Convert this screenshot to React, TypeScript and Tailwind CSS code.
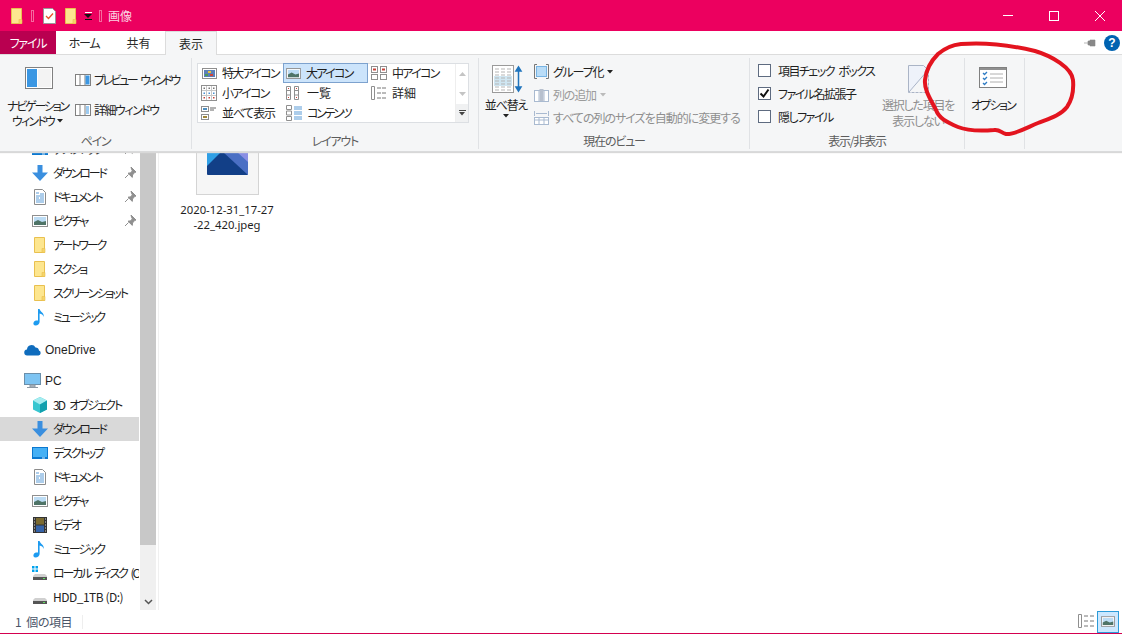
import { ReactNode } from "react";

const Folder = ({ size = 16 }: { size?: number }) => (
  <svg width={size} height={size} viewBox="0 0 16 16">
    <path d="M2.5 .5h10v15h-10z" fill="#fde68f" stroke="#e9c04f" />
    <path d="M10 15.5v-4h3v4z" fill="#f6d469" stroke="#e9c04f" strokeWidth=".6" />
  </svg>
);

const Down = () => (
  <svg width="16" height="16" viewBox="0 0 16 16">
    <path d="M5.5 0h5v7.5H16L8 16 0 7.5h5.5z" fill="#3a8fdf" />
  </svg>
);

const Doc = () => (
  <svg width="16" height="16" viewBox="0 0 16 16">
    <path d="M2.5 .5h8l3 3v12h-11z" fill="#fff" stroke="#8b8b8b" />
    <path d="M4 4h3M8 5h4M4 7h8M4 9h3M8 9h4M4 11h8M4 13h8" stroke="#5a9bd6" />
  </svg>
);

const Pic = ({ w = 16, h = 12 }: { w?: number; h?: number }) => (
  <svg width={w} height={h} viewBox="0 0 16 12">
    <rect x=".5" y=".5" width="15" height="11" fill="#fff" stroke="#8f8f8f" />
    <rect x="2" y="2" width="12" height="8" fill="#bcdcf4" />
    <path d="M2 7l4-2 4 2 4-1v4H2z" fill="#4f7467" />
  </svg>
);

const Note = () => (
  <svg width="16" height="18" viewBox="0 0 16 18">
    <path d="M6 1h1.600c.4 3 5 3.400 4 8-.6-2-2-3-4-3.400V14c0 2-2 3.400-4 3.400S1 16 1.600 14.400 4.200 12.200 6 12.600z" fill="#1d9bf0" />
  </svg>
);

const Cloud = () => (
  <svg width="17" height="12" viewBox="0 0 17 12">
    <path d="M3.500 11.500a3 3 0 0 1-.5-6 4.500 4.500 0 0 1 8.500-2 3.500 3.500 0 0 1 3.500 3 2.600 2.600 0 0 1 -.5 5z" fill="#0f6cbd" />
  </svg>
);

const Monitor = () => (
  <svg width="17" height="16" viewBox="0 0 17 16">
    <rect x=".5" y=".5" width="16" height="11" fill="#7ec4f2" stroke="#6b8faa" />
    <path d="M6 12h5v2H6zM3 14.500h11" stroke="#8c98a3" fill="#b9c3cc" />
  </svg>
);

const Cube = () => (
  <svg width="16" height="16" viewBox="0 0 16 16">
    <path d="M8 0l7 3.500v9L8 16l-7-3.500v-9z" fill="#37c6d0" />
    <path d="M8 7.500L1 3.500 8 0l7 3.500z" fill="#a5ecf0" />
    <path d="M8 7.500V16l7-3.500v-9z" fill="#12a0ae" />
  </svg>
);

const Desktop = () => (
  <svg width="16" height="12" viewBox="0 0 16 12">
    <rect width="16" height="12" fill="#0b78d0" />
    <rect x="1" y="1" width="14" height="9" fill="#45b0f5" />
    <rect x="10" y="10.500" width="3" height="1" fill="#d6ecfb" />
  </svg>
);

const Film = () => (
  <svg width="14" height="16" viewBox="0 0 14 16">
    <rect width="14" height="16" fill="#333" />
    <rect x="3" y="1" width="8" height="6.500" fill="#7a6a30" />
    <rect x="3" y="8.500" width="8" height="6.500" fill="#3563a8" />
    <path d="M1 2h1M1 5h1M1 8h1M1 11h1M1 14h1M12 2h1M12 5h1M12 8h1M12 11h1M12 14h1" stroke="#ddd" />
  </svg>
);

const Drive = ({ win = false }: { win?: boolean }) => (
  <svg width="16" height="14" viewBox="0 0 16 14">
    {win && <path d="M0 0h2.500v2.500H0zM3.500 0H6v2.500H3.500zM0 3.500h2.500V6H0zM3.500 3.500H6V6H3.500z" fill="#00a2ed" />}
    <path d="M3 8h10l2 2v3H1v-3z" fill="#d0d0d0" />
    <rect x="1" y="11" width="14" height="3" fill="#555" />
    <rect x="11" y="12" width="2" height="1" fill="#5fe05f" />
  </svg>
);

const Pin = ({ color = "#8f8f8f" }: { color?: string }) => (
  <svg width="12" height="12" viewBox="0 0 12 12">
    <path d="M7 0l5 5-1.500.6-2 2.400-.2 2.400L4 6.200l2.400-.3 2-2-.8-1.500zM4.500 7.500L1 11" fill={color} stroke={color} />
  </svg>
);

const Caret = ({ color = "#222" }: { color?: string }) => (
  <svg width="6" height="4" viewBox="0 0 6 4" className="inline-block">
    <path d="M0 0h6L3 3.500z" fill={color} />
  </svg>
);

function TreeRow({ icon, label, pin, active, track = "tracking-[-2.100px] [word-spacing:4px]" }: { icon: ReactNode; label: string; pin?: boolean; active?: boolean; track?: string }) {
  return (
    <div className={`flex h-[24px] w-[139px] items-center whitespace-nowrap overflow-hidden ${active ? "bg-[#d9d9d9]" : ""}`}>
      <span className="ml-[32px] flex w-[16px] shrink-0 justify-center">{icon}</span>
      <span className={`ml-[5px] flex-1 overflow-hidden leading-[18px] ${track}`}>{label}</span>
      {pin && (
        <span className="mr-[3px] shrink-0">
          <Pin />
        </span>
      )}
    </div>
  );
}

const GalleryIcon = ({ kind }: { kind: string }) => {
  if (kind === "pic") return <Pic w={15} h={11} />;
  if (kind === "xl")
    return (
      <svg width="15" height="11" viewBox="0 0 15 11">
        <rect x=".5" y=".5" width="14" height="10" fill="#fff" stroke="#8f8f8f" />
        <rect x="2" y="2" width="11" height="7" fill="#5c7fb8" />
        <path d="M6 3h3v2H6z" fill="#e8c43a" />
        <path d="M8 6h3v2H8z" fill="#d0433a" />
        <path d="M3 6h3v2H3z" fill="#4f9a55" />
      </svg>
    );
  if (kind === "grid")
    return (
      <svg width="16" height="16" viewBox="0 0 16 16">
        <rect x=".5" y=".5" width="15" height="15" fill="#fff" stroke="#8f8f8f" />
        <path d="M5.500 1v14M10.500 1v14M1 5.500h14M1 10.500h14" stroke="#c8c8c8" />
        <path d="M2.500 2.500h1.500v1.500h-1.500zM7.500 2.500h1.500v1.500h-1.500zM12 2.500h1.500v1.500h-1.500z" fill="#777" />
        <path d="M2.500 7.500h1.500v1.500h-1.500zM7.500 7.500h1.500v1.500h-1.500zM12 7.500h1.500v1.500h-1.500z" fill="#4a90d0" />
        <path d="M2.500 12h1.500v1.500h-1.500zM7.500 12h1.500v1.500h-1.500zM12 12h1.500v1.500h-1.500z" fill="#c8433a" />
      </svg>
    );
  if (kind === "list")
    return (
      <svg width="16" height="16" viewBox="0 0 16 16">
        <path d="M.5 1.500h4v13h-4zM8.500 1.500h4v13h-4z" fill="#fff" stroke="#8f8f8f" />
        <path d="M1 5.500h3M1 10h3M9 5.500h3M9 10h3" stroke="#8f8f8f" />
        <path d="M2 3h1v1H2zM10 3h1v1h-1zM2 12h1v1H2zM10 12h1v1h-1z" fill="#d0433a" />
      </svg>
    );
  if (kind === "detail")
    return (
      <svg width="16" height="16" viewBox="0 0 16 16">
        <path d="M.5 1.500h3v13h-3z" fill="#fff" stroke="#8f8f8f" />
        <path d="M6 3h4M11 3h4M6 8h4M11 8h4M6 13h4M11 13h4" stroke="#777" />
      </svg>
    );
  if (kind === "tile")
    return (
      <svg width="16" height="16" viewBox="0 0 16 16">
        <rect x=".5" y="1.500" width="7" height="5" fill="#fff" stroke="#8f8f8f" />
        <rect x=".5" y="9.500" width="7" height="5" fill="#fff" stroke="#8f8f8f" />
        <path d="M2 3h4v2H2z" fill="#4f8fc0" />
        <path d="M2 11h4v2H2z" fill="#a0873a" />
        <path d="M9 3h6M9 5h4" stroke="#666" />
      </svg>
    );
  if (kind === "content")
    return (
      <svg width="16" height="16" viewBox="0 0 16 16">
        <path d="M.5 .5h5v4h-5zM.5 6h5v4h-5zM.5 11.500h5v4h-5z" fill="#fff" stroke="#8f8f8f" />
        <path d="M8 2h8M8 4h8M8 7h8M8 9h8M8 12h8M8 14h8" stroke="#5a9bd6" />
      </svg>
    );
  return (
    <svg width="16" height="16" viewBox="0 0 16 16">
      <rect x=".5" y="1.500" width="6" height="6" fill="#fff" stroke="#8f8f8f" />
      <rect x="9.500" y="1.500" width="6" height="6" fill="#fff" stroke="#8f8f8f" />
      <rect x=".5" y="9.500" width="6" height="5" fill="#fff" stroke="#8f8f8f" />
      <rect x="9.500" y="9.500" width="6" height="5" fill="#fff" stroke="#8f8f8f" />
      <path d="M2 3.500h3v2H2zM11 3.500h3v2h-3z" fill="#c8433a" />
    </svg>
  );
};

function GalleryItem({ kind, label, on, track = "tracking-[-1.700px]" }: { kind: string; label: string; on?: boolean; track?: string }) {
  return (
    <div className={`flex h-[20px] items-center whitespace-nowrap ${on ? "border border-[#7da2ce] bg-[#cce4fb] pl-[1px]" : "pl-[3px]"}`}>
      <span className="flex w-[16px] justify-center">
        <GalleryIcon kind={kind} />
      </span>
      <span className={`ml-[5px] ${track}`}>{label}</span>
    </div>
  );
}

function Check({ label, on }: { label: string; on?: boolean }) {
  return (
    <div className="flex h-[23px] items-center whitespace-nowrap">
      <span className="flex h-[13px] w-[13px] items-center justify-center border border-[#5e6b80] bg-white">
        {on && (
          <svg width="11" height="11" viewBox="0 0 11 11">
            <path d="M1.500 5.500l3 3 5-7" fill="none" stroke="#111" strokeWidth="2" />
          </svg>
        )}
      </span>
      <span className="ml-[7px] tracking-[-1.500px] [word-spacing:3px]">{label}</span>
    </div>
  );
}

function Group({ w, label, children, last }: { w: string; label: string; children: ReactNode; last?: boolean }) {
  return (
    <div className={`${w} flex h-[91px] shrink-0 flex-col ${last ? "" : "border-r border-[#e0e2e5]"}`}>
      <div className="flex h-[75px]">{children}</div>
      <div className="flex flex-1 items-center justify-center text-[#5c5c5c]">{label}</div>
    </div>
  );
}

const Tab = ({ w, label }: { w: string; label: string }) => (
  <div className={`${w} flex items-center justify-center text-[#2a2a2a]`}>{label}</div>
);

export default function App() {
  return (
    <div className="relative flex h-[634px] w-[1122px] flex-col overflow-hidden bg-white text-[12px] leading-none text-[#1f1f1f] [font-family:'Noto_Sans_CJK_JP','Liberation_Sans',sans-serif] [font-feature-settings:'palt'] tracking-[-1.200px]">
      {/* title bar */}
      <div className="flex h-[31px] shrink-0 items-center bg-[#ec005f] pl-[9px]">
        <Folder />
        <span className="ml-[6px] h-[12px] w-[3px] border border-[#f46a9f]" />
        <span className="ml-[9px] flex">
          <svg width="13" height="16" viewBox="0 0 13 16">
            <path d="M.5 .5h9l3 3v12H.500z" fill="#fff" stroke="#999" />
            <path d="M3 8l2.500 2.500L10 5.500" fill="none" stroke="#e8542a" strokeWidth="1.300" />
          </svg>
        </span>
        <span className="ml-[7px] flex">
          <Folder />
        </span>
        <span className="ml-[5px] flex flex-col items-center gap-[1px]">
          <span className="h-[1px] w-[7px] bg-white" />
          <span className="border-x-[4px] border-t-[4px] border-x-transparent border-t-[#111]" />
          <span className="h-[1px] w-[7px] bg-[#111]" />
        </span>
        <span className="ml-[7px] h-[12px] w-[3px] border border-[#f46a9f]" />
        <span className="ml-[6px] text-[12px] tracking-normal text-[#fbd3e3]">画像</span>
        <div className="-mr-[1px] ml-auto flex h-full">
          <div className="flex w-[46px] items-center justify-center">
            <span className="h-[1px] w-[10px] bg-white" />
          </div>
          <div className="flex w-[46px] items-center justify-center">
            <span className="h-[10px] w-[10px] border border-white" />
          </div>
          <div className="flex w-[46px] items-center justify-center">
            <svg width="10" height="10" viewBox="0 0 10 10">
              <path d="M0 0l10 10M10 0L0 10" stroke="#fff" />
            </svg>
          </div>
        </div>
      </div>

      {/* tabs */}
      <div className="flex h-[24px] shrink-0 items-stretch border-b border-[#dcdcdc]">
        <div className="flex w-[56px] items-center justify-center bg-[#b90050] text-white">ファイル</div>
        <Tab w="w-[56px]" label="ホーム" />
        <div className="flex w-[53px] items-center justify-center tracking-normal text-[#2a2a2a]">共有</div>
        <div className="-mb-[1px] flex w-[52px] items-center justify-center border-x border-t border-[#dcdcdc] bg-[#f5f6f7] tracking-normal">表示</div>
        <div className="ml-auto flex items-center gap-[8px] pr-[2px]">
          <svg width="12" height="8" viewBox="0 0 12 8">
            <path d="M0 4h4M4 2h2v4H4zM6 1h5v6H6z" fill="#888" stroke="#888" strokeWidth=".6" />
          </svg>
          <span className="flex h-[16px] w-[16px] items-center justify-center rounded-full bg-[#0063b1] text-[12px] font-bold tracking-normal text-white [font-family:'Liberation_Sans',sans-serif]">?</span>
        </div>
      </div>

      {/* ribbon */}
      <div className="relative z-10 flex h-[97px] shrink-0 border-b border-[#dadbdc] bg-[#f5f6f7] pt-[3px] shadow-[0_1px_1px_#d8d8d8]">
        <Group w="w-[192px]" label="ペイン">
          <div className="flex w-[75px] shrink-0 flex-col items-center pl-[3px] pt-[9px]">
            <svg width="28" height="22" viewBox="0 0 28 22">
              <rect x=".5" y=".5" width="27" height="21" fill="#fff" stroke="#808080" />
              <rect x="2" y="2" width="10" height="18" fill="#3b97e3" />
              <rect x="13" y="2" width="13" height="18" fill="#f3f3f3" />
            </svg>
            <span className="mr-[3px] mt-[11px] whitespace-nowrap tracking-[-2.200px]">ナビゲーション</span>
            <span className="mr-[3px] mt-[3px] flex items-center gap-[3px] whitespace-nowrap tracking-[-1.800px]">
              ウィンドウ <Caret />
            </span>
          </div>
          <div className="flex flex-col pt-[7px]">
            <div className="flex h-[30px] items-center whitespace-nowrap">
              <svg width="16" height="12" viewBox="0 0 16 12">
                <rect x=".5" y=".5" width="15" height="11" fill="#fff" stroke="#808080" />
                <path d="M5 1v10M10 1v10" stroke="#808080" />
                <rect x="10.500" y="1.500" width="4" height="9" fill="#3b97e3" />
              </svg>
              <span className="ml-[3px] tracking-[-2.500px] [word-spacing:4px]">プレビュー ウィンドウ</span>
            </div>
            <div className="flex h-[30px] items-center whitespace-nowrap">
              <svg width="16" height="12" viewBox="0 0 16 12">
                <rect x=".5" y=".5" width="15" height="11" fill="#fff" stroke="#808080" />
                <path d="M5 1v10M10 1v10" stroke="#808080" />
                <path d="M11 3h3M11 5h3M11 7h3M11 9h3" stroke="#3b97e3" />
              </svg>
              <span className="ml-[3px] tracking-[-1.500px]">詳細ウィンドウ</span>
            </div>
          </div>
        </Group>

        <Group w="w-[287px]" label="レイアウト">
          <div className="ml-[5px] mt-[5px] flex h-[60px] w-[272px] border border-[#dcdfe3] bg-white">
            <div className="-mt-[1px] w-[85px]">
              <GalleryItem kind="xl" label="特大アイコン" track="tracking-[-1.700px]" />
              <GalleryItem kind="grid" label="小アイコン" />
              <GalleryItem kind="tile" label="並べて表示" track="tracking-[-1.200px]" />
            </div>
            <div className="-mt-[1px] w-[85px]">
              <GalleryItem kind="pic" label="大アイコン" on />
              <GalleryItem kind="list" label="一覧" track="tracking-normal" />
              <GalleryItem kind="content" label="コンテンツ" track="tracking-[-2.300px]" />
            </div>
            <div className="-mt-[1px] w-[87px]">
              <GalleryItem kind="medium" label="中アイコン" />
              <GalleryItem kind="detail" label="詳細" track="tracking-normal" />
            </div>
            <div className="flex flex-1 flex-col items-center border-l border-[#eeeeee]">
              <span className="flex h-[20px] items-center">
                <svg width="7" height="4" viewBox="0 0 7 4"><path d="M3.500 0L7 4H0z" fill="#c4c4c4" /></svg>
              </span>
              <span className="flex h-[20px] items-center">
                <svg width="7" height="4" viewBox="0 0 7 4"><path d="M0 0h7L3.500 4z" fill="#c4c4c4" /></svg>
              </span>
              <span className="flex h-[18px] w-full flex-col items-center justify-center gap-[1px] bg-[#f0f1f2]">
                <span className="h-[1px] w-[7px] bg-[#444]" />
                <Caret color="#444" />
              </span>
            </div>
          </div>
        </Group>

        <Group w="w-[271px]" label="現在のビュー">
          <div className="ml-[2px] flex w-[50px] shrink-0 flex-col items-center pt-[7px]">
            <svg width="31" height="28" viewBox="0 0 31 28" className="ml-[3px]">
              <rect x=".5" y=".5" width="21" height="27" fill="#fff" stroke="#9a9a9a" />
              <rect x="2" y="11" width="18" height="10" fill="#cfe6f2" />
              <path d="M3 4h4M9 4h4M15 4h4M3 7h4M9 7h4M15 7h4M3 10h4M9 10h4M15 10h4M3 13h4M9 13h4M15 13h4M3 16h4M9 16h4M15 16h4M3 19h4M9 19h4M15 19h4M3 22h4M9 22h4M15 22h4M3 25h4M9 25h4M15 25h4" stroke="#b5b5b5" />
              <path d="M26.500 3v22M24 6l2.500-4L29 6zM24 22l2.500 4 2.500-4z" stroke="#1f74bd" fill="#1f74bd" strokeWidth="1.500" />
            </svg>
            <span className="mt-[6px] whitespace-nowrap">並べ替え</span>
            <span className="mt-[3px] flex"><Caret /></span>
          </div>
          <div className="flex flex-col whitespace-nowrap pl-[3px] pt-[2px]">
            <div className="flex h-[23px] items-center">
              <svg width="15" height="15" viewBox="0 0 15 15">
                <path d="M3 .5H.5v14H3M12 .5h2.500v14H12" fill="none" stroke="#777" />
                <rect x="2.500" y="2.500" width="10" height="10" fill="#b9dcf7" stroke="#79b4e3" />
              </svg>
              <span className="ml-[4px]">グループ化</span>
              <span className="ml-[4px] flex"><Caret /></span>
            </div>
            <div className="flex h-[23px] items-center text-[#9b9b9b]">
              <svg width="15" height="15" viewBox="0 0 15 15">
                <rect x=".5" y="3.500" width="14" height="11" fill="#fff" stroke="#a9bad0" />
                <path d="M5 4v10M10 4v10" stroke="#a9bad0" />
                <rect x="5.500" y="2" width="4" height="12" fill="#b7c0ce" />
              </svg>
              <span className="ml-[4px]">列の追加</span>
              <span className="ml-[4px] flex"><Caret color="#bbbbbb" /></span>
            </div>
            <div className="flex h-[23px] items-center text-[#8f8f8f]">
              <svg width="15" height="15" viewBox="0 0 15 15">
                <path d="M.5 1v5M14.500 1v5M2 3.500h11" stroke="#a9bad0" />
                <rect x=".5" y="7.500" width="14" height="7" fill="#fff" stroke="#a9bad0" />
                <path d="M.5 10h14M5 8v6M10 8v6" stroke="#a9bad0" />
              </svg>
              <span className="ml-[4px] tracking-[-1px]">すべての列のサイズを自動的に変更する</span>
            </div>
          </div>
        </Group>

        <Group w="w-[215px]" label="表示/非表示">
          <div className="ml-[8px] flex w-[130px] shrink-0 flex-col pt-[1px]">
            <Check label="項目チェック ボックス" />
            <Check label="ファイル名拡張子" on />
            <Check label="隠しファイル" />
          </div>
          <div className="flex w-[60px] shrink-0 flex-col items-center pt-[7px] text-[#8f8f8f]">
            <svg width="21" height="28" viewBox="0 0 21 28">
              <path d="M.5 .5h15l5 5v22H.5z" fill="#eef2fa" stroke="#aab4c6" />
              <path d="M1 27L20 5" stroke="#aab4c6" />
              <path d="M20.500 6v21.500h-19" fill="#f5f6f7" stroke="#aab4c6" strokeDasharray="2 2" />
            </svg>
            <span className="mt-[6px] whitespace-nowrap">選択した項目を</span>
            <span className="mt-[4px] whitespace-nowrap">表示しない</span>
          </div>
        </Group>

        <Group w="w-[60px]" label="">
          <div className="flex w-full flex-col items-center pr-[3px] pt-[9px]">
            <svg width="28" height="21" viewBox="0 0 28 21">
              <rect x=".5" y=".5" width="27" height="20" fill="#fff" stroke="#808080" />
              <rect x="1" y="1" width="26" height="2" fill="#909090" />
              <path d="M4 6l1.500 1.500L8 5M4 11l1.500 1.500L8 10M4 16l1.500 1.500L8 15" fill="none" stroke="#2f7cc4" strokeWidth="1.300" />
              <path d="M11 7h13M11 11h13M11 15h13" stroke="#b0b0b0" />
            </svg>
            <span className="mt-[11px] whitespace-nowrap tracking-[-1.700px]">オプション</span>
          </div>
        </Group>
      </div>

      {/* main */}
      <div className="flex min-h-0 flex-1">
        <div className="flex h-full w-[140px] shrink-0 flex-col overflow-hidden">
          <div className="-mt-[15px]">
            <TreeRow icon={<Desktop />} label="デスクトップ" pin />
            <TreeRow icon={<Down />} label="ダウンロード" pin />
            <TreeRow icon={<Doc />} label="ドキュメント" pin />
            <TreeRow icon={<Pic />} label="ピクチャ" pin />
            <TreeRow icon={<Folder />} label="アートワーク" />
            <TreeRow icon={<Folder />} label="スクショ" />
            <TreeRow icon={<Folder />} label="スクリーンショット" track="tracking-[-2px]" />
            <TreeRow icon={<Note />} label="ミュージック" />
            <div className="mt-[9px] flex h-[24px] items-center pl-[24px] tracking-normal [font-family:'Liberation_Sans',sans-serif]">
              <Cloud />
              <span className="ml-[4px]">OneDrive</span>
            </div>
            <div className="mt-[7px] flex h-[24px] items-center pl-[24px] tracking-normal [font-family:'Liberation_Sans',sans-serif]">
              <Monitor />
              <span className="ml-[4px]">PC</span>
            </div>
            <TreeRow icon={<Cube />} label="3D オブジェクト" track="tracking-[-1.800px] [word-spacing:4px]" />
            <TreeRow icon={<Down />} label="ダウンロード" active />
            <TreeRow icon={<Desktop />} label="デスクトップ" />
            <TreeRow icon={<Doc />} label="ドキュメント" />
            <TreeRow icon={<Pic />} label="ピクチャ" />
            <TreeRow icon={<Film />} label="ビデオ" />
            <TreeRow icon={<Note />} label="ミュージック" />
            <TreeRow icon={<Drive win />} label="ローカル ディスク (C:)" track="tracking-[-2.100px] [word-spacing:3px]" />
            <TreeRow icon={<Drive />} label="HDD_1TB (D:)" track="tracking-[-0.500px]" />
          </div>
        </div>

        {/* scrollbar */}
        <div className="flex h-[458px] w-[16px] shrink-0 flex-col bg-[#f0f0f0]">
          <div className="h-[393px] bg-[#c8c8c8]" />
          <div className="mt-auto flex h-[17px] items-center justify-center">
            <svg width="9" height="6" viewBox="0 0 9 6">
              <path d="M1 1l3.500 3.500L8 1" fill="none" stroke="#555" strokeWidth="1.500" />
            </svg>
          </div>
        </div>
        <div className="ml-[2px] h-[458px] w-[1px] shrink-0 bg-[#f0f0f0]" />

        {/* files */}
        <div className="flex-1 overflow-hidden">
          <div className="ml-[9px] flex w-[118px] flex-col items-center">
            <div className="flex h-[43px] w-[63px] justify-center border-x border-b border-[#d4d4d4] bg-[#f6f6f6]">
              <svg width="41" height="23" viewBox="0 0 41 23">
                <rect width="41" height="23" rx="1" fill="#123f87" />
                <path d="M0 0h14L0 14z" fill="#2f9fe5" />
                <path d="M16 0L41 23V0z" fill="#4a6fc4" />
                <path d="M30 0L41 10V0z" fill="#8a8fe4" />
              </svg>
            </div>
            <div className="mt-[7px] whitespace-nowrap text-center text-[11.300px] leading-[15px] tracking-normal [font-family:'Noto_Sans',sans-serif] [font-feature-settings:normal]">
              2020-12-31_17-27
              <br />
              -22_420.jpeg
            </div>
          </div>
        </div>
      </div>

      {/* status */}
      <div className="flex h-[24px] shrink-0 items-center border-b border-[#d4004f] pl-[15px] text-[#4a5568]">
        <span className="tracking-[-0.500px] [word-spacing:3px]">1 個の項目</span>
        <span className="ml-[10px] h-[14px] w-[1px] bg-[#eeeeee]" />
        <div className="ml-auto mr-[3px] flex items-center gap-[2px]">
          <svg width="17" height="15" viewBox="0 0 17 15">
            <path d="M.5 .5h3v13h-3z" fill="#fff" stroke="#8f8f8f" />
            <path d="M6 2h4M12 2h4M6 7h4M12 7h4M6 12h4M12 12h4" stroke="#777" />
          </svg>
          <span className="flex h-[22px] w-[22px] items-center justify-center border border-[#2b9bd8] bg-[#cce8ff]">
            <Pic w={14} h={11} />
          </span>
        </div>
      </div>

      {/* hand drawn red circle */}
      <svg className="pointer-events-none absolute left-0 top-0 z-20" width="1122" height="634" viewBox="0 0 1122 634">
        <path
          d="M961 44C985 42 1010 45 1035 51C1052 56 1072 68 1073 80C1074 92 1072 100 1067 107C1060 116 1048 119 1038 123C1026 128 1014 135 1006 134C1001 133 1000 129 994 130C982 131 968 131 958 127C946 122 939 118 936 110C931 100 924 90 925 80C926 70 932 60 938 54C945 48 952 45 961 44Z"
          fill="none"
          stroke="#e3141f"
          strokeWidth="4"
          strokeLinecap="round"
        />
      </svg>
    </div>
  );
}
